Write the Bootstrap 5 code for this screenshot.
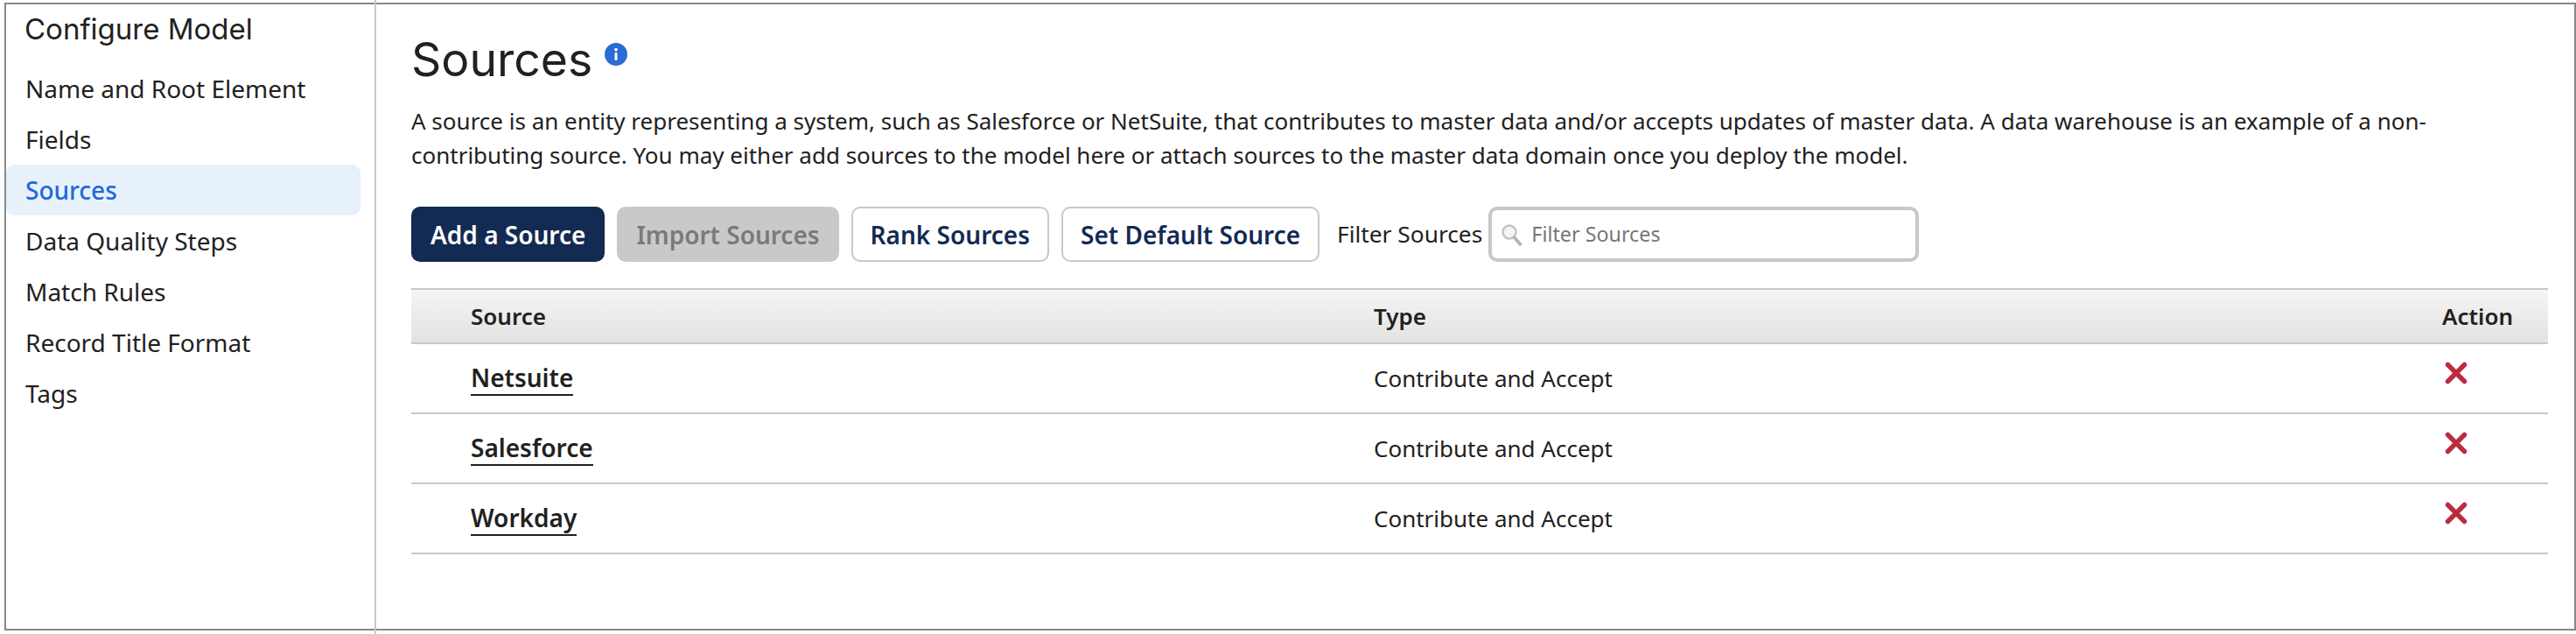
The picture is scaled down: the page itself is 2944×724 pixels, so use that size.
<!DOCTYPE html>
<html lang="en">
<head>
  <meta charset="UTF-8" />
  <meta name="viewport" content="width=device-width, initial-scale=1" />
  <title>Configure Model | Sources</title>
  <link href="https://cdn.jsdelivr.net/npm/bootstrap@5.3.0/dist/css/bootstrap.min.css" rel="stylesheet" />
  <style>
  html, body { height: 100%; }
  body {
    font-family: "Noto Sans", sans-serif;
    font-size: 28px;
    color: #212121;
    background: #fff;
    overflow: hidden;
  }

  .model-frame {
    height: 717px;
    margin: 3px 0 0 5px;
    border: 2px solid #888;
  }

  /* divider runs past the frame on both ends */
  .side-panel {
    width: 423px;
    flex: none;
    margin: -5px 0 -6px 0;
    padding-top: 5px;
    border-right: 2px solid #c8c8c8;
  }
  .side-title {
    font-family: Inter, sans-serif;
    font-size: 33px;
    font-weight: 400;
    line-height: 52px;
    margin: 2px 0 13px 0;
    padding-left: 21px;
    color: #212121;
  }
  .side-link {
    display: block;
    width: 405px;
    height: 58px;
    line-height: 58px;
    padding-left: 22px;
    color: #212121;
    text-decoration: none;
    border-radius: 10px;
  }
  .side-link.is-current {
    background: #e6f1fb;
    color: #2468d6;
    font-weight: 500;
  }

  .main-panel { padding: 0 30px 0 40px; min-width: 0; }
  .page-title {
    font-family: Inter, sans-serif;
    font-size: 53.5px;
    font-weight: 400;
    line-height: 64px;
    margin: 31px 0 0 0;
    color: #212121;
  }
  .info-dot { width: 26px; height: 26px; margin: 44px 0 0 14px; }
  .page-intro {
    font-size: 26px;
    line-height: 39px;
    margin: 19px 0 0 0;
  }

  .toolbar { margin-top: 39px; height: 63px; gap: 14px; }
  .tool-btn {
    font-size: 28px;
    font-weight: 600;
    line-height: 1;
    height: 63px;
    padding: 0 20px;
    border-radius: 10px;
    border: 2px solid #c8c8c8;
    background: #fff;
    color: #132a52;
  }
  .tool-btn.is-primary { background: #132a52; border-color: #132a52; color: #fff; }
  .tool-btn:disabled { background: #c9c9c9; border-color: #c9c9c9; color: #7a7a7a; opacity: 1; }
  .filter-label { font-size: 26.3px; margin: 0 -7px 0 6px; }
  .filter-box {
    width: 492px;
    height: 63px;
    padding: 0 10px;
    border: 4px solid #c8c8c8;
    border-radius: 10px;
  }
  .filter-box svg { width: 26px; height: 26px; flex: none; margin-right: 9px; }
  .filter-box input {
    border: 0;
    outline: 0;
    padding: 0;
    width: 100%;
    font-size: 23.3px;
    color: #212121;
  }
  .filter-box input::placeholder { color: #777; opacity: 1; }

  .source-table {
    table-layout: fixed;
    width: 100%;
    margin: 30px 0 0 0;
    border-collapse: collapse;
  }
  .source-table th {
    height: 62px;
    padding: 0;
    font-size: 26px;
    font-weight: 600;
    border-top: 2px solid #c8c8c8;
    border-bottom: 2px solid #c8c8c8;
    background: linear-gradient(#f5f5f5, #e2e2e2);
    vertical-align: middle;
  }
  .source-table td {
    height: 80px;
    padding: 0;
    font-size: 26px;
    border-bottom: 2px solid #c8c8c8;
    vertical-align: middle;
  }
  .source-table th:first-child { padding-left: 68px; }
  .source-table td:first-child { padding: 0 0 3px 68px; }
  .source-name {
    color: #212121;
    font-size: 28px;
    font-weight: 600;
    text-decoration: none;
    border-bottom: 2px solid #212121;
  }
  .remove-x { display: block; width: 26px; height: 26px; margin: -12px 0 0 3px; }
</style>
</head>
<body>
<div class="model-frame d-flex">
  <nav class="side-panel">
    <h2 class="side-title">Configure Model</h2>
    <a class="side-link" href="#">Name and Root Element</a>
    <a class="side-link" href="#">Fields</a>
    <a class="side-link is-current" href="#">Sources</a>
    <a class="side-link" href="#">Data Quality Steps</a>
    <a class="side-link" href="#">Match Rules</a>
    <a class="side-link" href="#">Record Title Format</a>
    <a class="side-link" href="#">Tags</a>
  </nav>

  <main class="main-panel flex-grow-1">
    <div class="d-flex align-items-start">
      <h1 class="page-title">Sources</h1>
      <svg class="info-dot" viewBox="0 0 26 26" aria-hidden="true">
        <circle cx="13" cy="13" r="13" fill="#2a6bd4"/>
        <circle cx="13" cy="7.6" r="1.9" fill="#fff"/>
        <rect x="11.5" y="11" width="3" height="9" rx="1" fill="#fff"/>
      </svg>
    </div>
    <p class="page-intro">A source is an entity representing a system, such as Salesforce or NetSuite, that contributes to master data and/or accepts updates of master data. A data warehouse is an example of a non-contributing source. You may either add sources to the model here or attach sources to the master data domain once you deploy the model.</p>

    <div class="toolbar d-flex align-items-center">
      <button class="btn tool-btn is-primary" type="button">Add a Source</button>
      <button class="btn tool-btn" type="button" disabled>Import Sources</button>
      <button class="btn tool-btn" type="button">Rank Sources</button>
      <button class="btn tool-btn" type="button">Set Default Source</button>
      <label class="filter-label" for="filterSources">Filter Sources</label>
      <div class="filter-box d-flex align-items-center">
        <svg viewBox="0 0 26 26" aria-hidden="true">
          <circle cx="10" cy="10" r="7.5" fill="#f4f4f4" stroke="#c4c4c4" stroke-width="2.4"/>
          <path d="M15.5 16l7 8" stroke="#b4b4b4" stroke-width="3.6" stroke-linecap="round"/>
        </svg>
        <input id="filterSources" type="text" placeholder="Filter Sources" />
      </div>
    </div>

    <table class="source-table">
      <colgroup><col style="width:1100px" /><col /><col style="width:121px" /></colgroup>
      <thead>
        <tr><th>Source</th><th>Type</th><th>Action</th></tr>
      </thead>
      <tbody id="sourceRows"></tbody>
    </table>
  </main>
</div>

<script>
  const sources = ['Netsuite', 'Salesforce', 'Workday'];
  const rows = document.getElementById('sourceRows');
  sources.forEach(name => {
    const tr = document.createElement('tr');
    tr.innerHTML = `
      <td><a class="source-name" href="#">${name}</a></td>
      <td>Contribute and Accept</td>
      <td>
        <svg class="remove-x" viewBox="0 0 26 26" aria-label="Remove ${name}">
          <path d="M3.5 3.5l19 19M22.5 3.5l-19 19" stroke="#b92d3f" stroke-width="5.5" stroke-linecap="round"/>
        </svg>
      </td>`;
    rows.appendChild(tr);
  });
</script>
<script src="https://cdn.jsdelivr.net/npm/bootstrap@5.3.0/dist/js/bootstrap.bundle.min.js"></script>
</body>
</html>
